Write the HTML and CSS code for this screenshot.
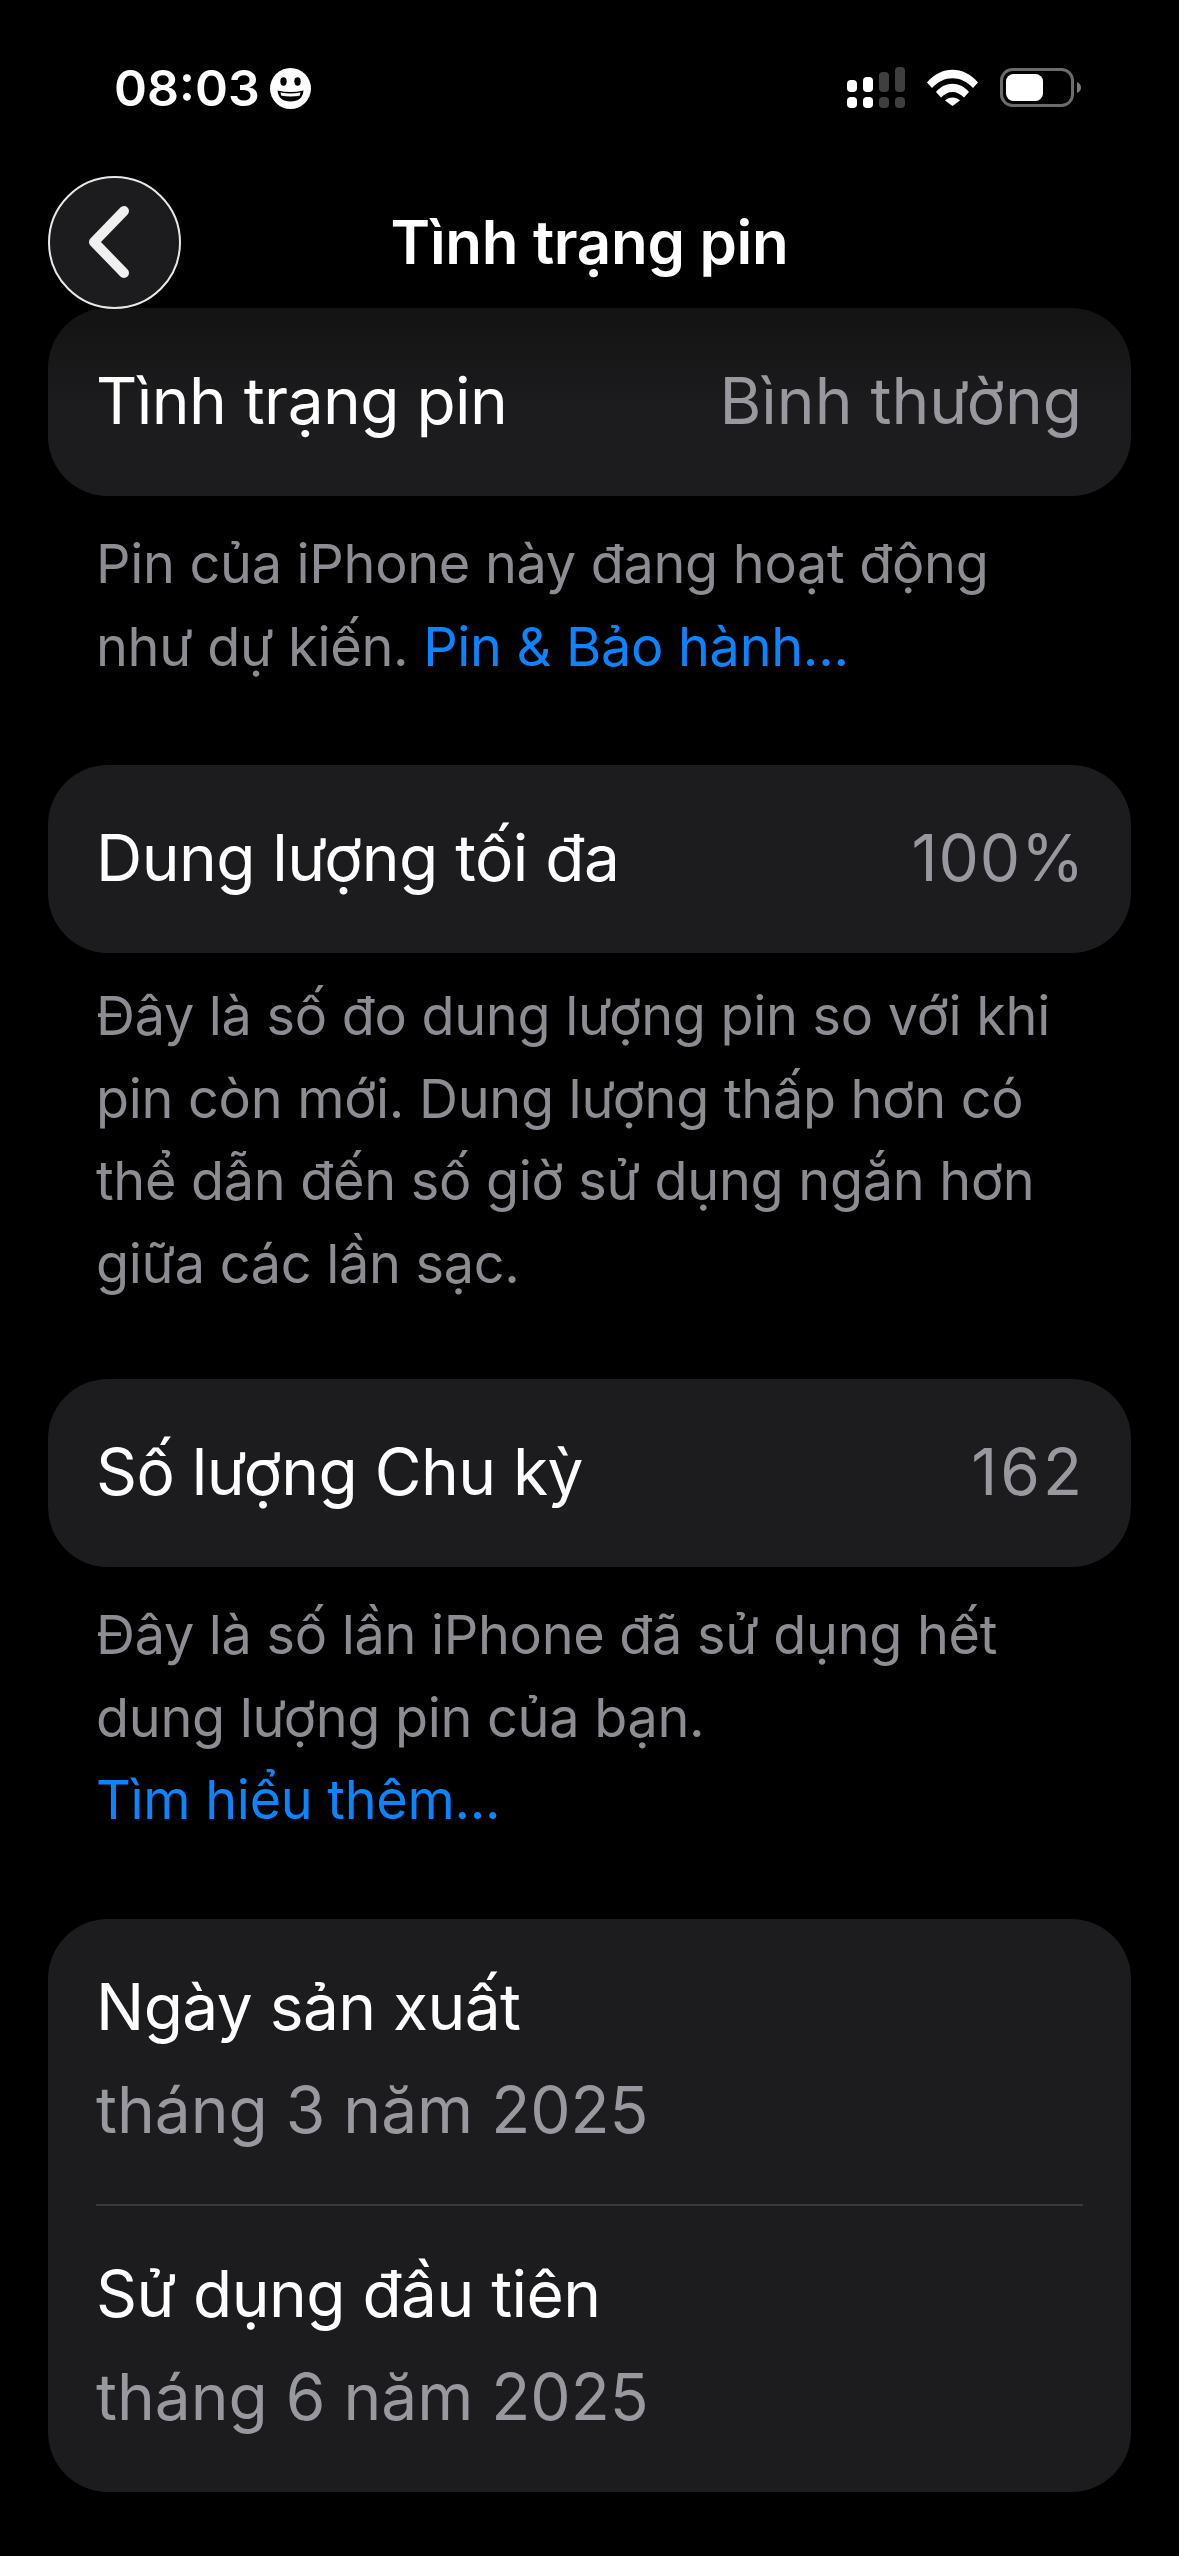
FILE: index.html
```html
<!DOCTYPE html>
<html lang="vi">
<head>
    <meta charset="UTF-8">
    <title>Tình trạng pin</title>
    <link rel="stylesheet" href="styles.css">
</head>
<body>
    <div class="status-bar">
        <div class="status-left">
            <span class="time">08:03</span>
            <svg class="smile" viewBox="0 0 41 41">
                <circle cx="20.5" cy="20.5" r="20.5" fill="#fff"/>
                <ellipse cx="13.5" cy="13.5" rx="3.2" ry="4.2" fill="#000"/>
                <ellipse cx="27.5" cy="13.5" rx="3.2" ry="4.2" fill="#000"/>
                <path d="M7.5 22.5q13 3 26 0q-1 11-13 11t-13-11z" fill="#000"/>
                <path d="M10.5 24.6q10 1.8 20 0q-.3 2.2-1 3.2q-9 1.4-18 0q-.7-1-1-3.2z" fill="#fff"/>
            </svg>
        </div>
        <div class="status-right">
            <svg class="signal" viewBox="0 0 58 41">
                <rect x="0" y="13" width="10" height="12" rx="4" fill="#fff"/>
                <rect x="16" y="10" width="10" height="15" rx="4" fill="#fff"/>
                <rect x="32" y="5" width="10" height="20" rx="4" fill="#3f3f3f"/>
                <rect x="48" y="0" width="10" height="25" rx="4" fill="#3f3f3f"/>
                <rect x="0" y="30" width="10" height="11" rx="4" fill="#fff"/>
                <rect x="16" y="30" width="10" height="11" rx="4" fill="#fff"/>
                <rect x="32" y="30" width="10" height="11" rx="4" fill="#3f3f3f"/>
                <rect x="48" y="30" width="10" height="11" rx="4" fill="#3f3f3f"/>
            </svg>
            <svg class="wifi" viewBox="0 0 51 37">
                <path d="M0 13.5C14-3.5 37-3.5 51 13.5L46 19C34 6 17 6 5 19z" fill="#fff"/>
                <path d="M9 23C18 12 33 12 42 23L37 28.500C30 21 21 21 14 28.500z" fill="#fff"/>
                <path d="M18 31.500C22 27.500 29 27.500 33 31.500L25.500 37z" fill="#fff"/>
            </svg>
            <svg class="battery" viewBox="0 0 81 39">
                <rect x="1.500" y="1.500" width="71" height="36" rx="11" fill="none" stroke="#6b6b6b" stroke-width="3"/>
                <rect x="6" y="6" width="37" height="27" rx="7.500" fill="#fff"/>
                <path d="M77 14q4 2 4 5.500t-4 5.500z" fill="#7a7a7a"/>
            </svg>
        </div>
    </div>

    <div class="nav-bar">
        <div class="back-btn">
            <svg class="chevron" viewBox="0 0 44 72">
                <path d="M36 5L6 36L36 67" fill="none" stroke="#f0f0f0" stroke-width="10" stroke-linecap="round" stroke-linejoin="round"/>
            </svg>
        </div>
        <h1 class="nav-title">Tình trạng pin</h1>
    </div>

    <div class="content">
        <div class="card row card-first">
            <span class="label">Tình trạng pin</span>
            <span class="value">Bình thường</span>
        </div>
        <p class="note">Pin của iPhone này đang hoạt động<br>như dự kiến. <a class="link">Pin &amp; Bảo hành...</a></p>

        <div class="card row">
            <span class="label">Dung lượng tối đa</span>
            <span class="value percent">100%</span>
        </div>
        <p class="note note-tight">Đây là số đo dung lượng pin so với khi<br>pin còn mới. Dung lượng thấp hơn có<br>thể dẫn đến số giờ sử dụng ngắn hơn<br>giữa các lần sạc.</p>

        <div class="card row">
            <span class="label">Số lượng Chu kỳ</span>
            <span class="value count">162</span>
        </div>
        <p class="note">Đây là số lần iPhone đã sử dụng hết<br>dung lượng pin của bạn.<br><a class="link">Tìm hiểu thêm...</a></p>

        <div class="card dates">
            <div class="date-item">
                <span class="label">Ngày sản xuất</span>
                <span class="value">tháng 3 năm 2025</span>
            </div>
            <div class="divider"></div>
            <div class="date-item">
                <span class="label">Sử dụng đầu tiên</span>
                <span class="value">tháng 6 năm 2025</span>
            </div>
        </div>
    </div>
</body>
</html>
```

FILE: styles.css
```css
* {
    box-sizing: border-box;
}

body {
    font-family: Inter, "Liberation Sans", sans-serif;
    background-color: #000;
    color: #fff;
    margin: 0;
    width: 1179px;
    height: 2556px;
    overflow: hidden;
}

.status-bar {
    height: 176px;
    padding: 67px 98px 0 114px;
    display: flex;
    justify-content: space-between;
    align-items: flex-start;
}

.status-left {
    display: flex;
    align-items: center;
    gap: 10px;
    height: 42px;
}

.time {
    font-size: 50px;
    font-weight: 600;
    line-height: 42px;
}

.smile {
    width: 41px;
    height: 41px;
}

.status-right {
    display: flex;
    align-items: flex-start;
    gap: 22px;
}

.signal {
    width: 58px;
    height: 41px;
}

.wifi {
    width: 51px;
    height: 37px;
    margin-top: 2px;
}

.battery {
    width: 81px;
    height: 39px;
    margin-top: 1px;
}

.nav-bar {
    height: 132px;
    padding-left: 48px;
    display: flex;
    align-items: center;
    position: relative;
}

.back-btn {
    width: 133px;
    height: 133px;
    border-radius: 50%;
    background-color: #1c1c1e;
    border: 2px solid #e8e8e8;
    display: flex;
    align-items: center;
    justify-content: center;
    padding-right: 10px;
}

.chevron {
    width: 44px;
    height: 72px;
}

.nav-title {
    position: absolute;
    left: 0;
    right: 0;
    top: 0;
    margin: 0;
    text-align: center;
    font-size: 60px;
    font-weight: 600;
    letter-spacing: -0.3px;
    line-height: 132px;
}

.content {
    padding: 0 48px;
}

.card {
    background-color: #1c1c1e;
    border-radius: 60px;
}

.card-first {
    background: linear-gradient(#131314, #1c1c1e 100px);
}

.row {
    height: 188px;
    padding: 0 49px 4px 48px;
    display: flex;
    justify-content: space-between;
    align-items: center;
}

.label {
    font-size: 64px;
    letter-spacing: -0.55px;
    line-height: 83px;
}

.value {
    font-size: 64px;
    line-height: 83px;
    color: #98989f;
}

.percent {
    letter-spacing: 1px;
    margin-right: -3px;
}

.count {
    letter-spacing: 3px;
    margin-right: -3px;
}

.note {
    margin: 27px 0 77px;
    padding: 0 48px;
    font-size: 54px;
    letter-spacing: -0.3px;
    line-height: 82.5px;
    color: #8c8c92;
}

.note-tight {
    margin: 22px 0 74px;
}

.link {
    color: #0a84ff;
}

.dates {
    padding: 0 48px;
    height: 573px;
}

.date-item {
    height: 285px;
    padding-bottom: 6px;
    display: flex;
    flex-direction: column;
    justify-content: center;
    gap: 20px;
}

.divider {
    height: 2px;
    background-color: #3a3a3c;
}
```
